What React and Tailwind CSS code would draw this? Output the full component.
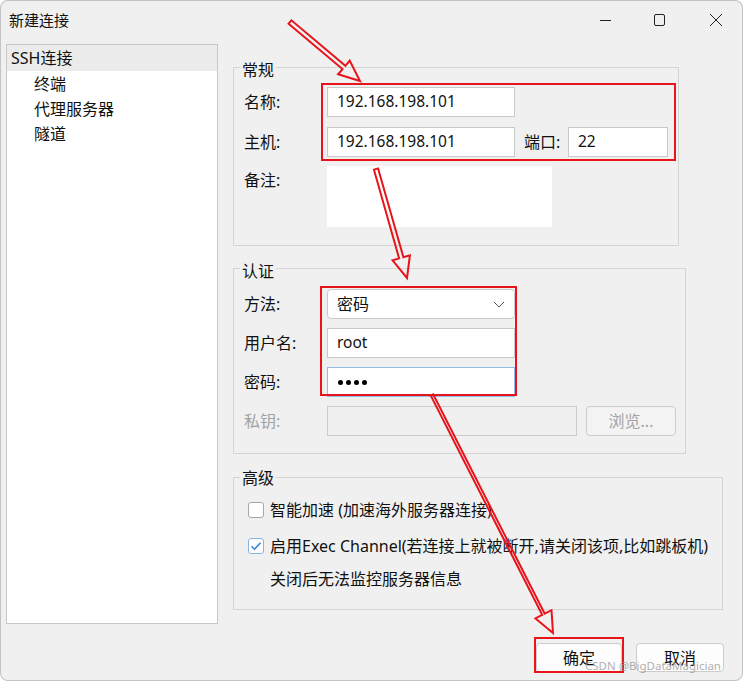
import React from "react";

// hollow arrow outline, tail -> tip
function arrowPoints(x1, y1, x2, y2, w = 2.2, hl = 21, hw = 9) {
  const dx = x2 - x1;
  const dy = y2 - y1;
  const len = Math.hypot(dx, dy);
  const ux = dx / len;
  const uy = dy / len;
  const nx = -uy;
  const ny = ux;
  const bx = x2 - ux * hl;
  const by = y2 - uy * hl;
  const pts = [
    [x1 + nx * w, y1 + ny * w],
    [bx + nx * w, by + ny * w],
    [bx + nx * hw, by + ny * hw],
    [x2, y2],
    [bx - nx * hw, by - ny * hw],
    [bx - nx * w, by - ny * w],
    [x1 - nx * w, y1 - ny * w],
  ];
  return pts.map((p) => p[0].toFixed(1) + "," + p[1].toFixed(1)).join(" ");
}

function GroupBox({ title, className, legendClass = "-mt-[8px]", children }) {
  return (
    <div className={`border border-[#d4d4d4] ${className}`}>
      <div className={`${legendClass} ml-[6px] px-[2px] w-fit bg-[#f0f0f0] leading-[20px]`}>{title}</div>
      {children}
    </div>
  );
}

function Input({ value, className = "" }) {
  return (
    <div className={`h-[30px] bg-white border border-[#c9c9c9] flex items-center pl-[9px] text-[15.5px] ${className}`}>
      {value}
    </div>
  );
}

function Label({ children, gray }) {
  return <div className={`w-[83px] shrink-0 ${gray ? "text-[#a3a3a3]" : ""}`}>{children}</div>;
}

export default function App() {
  return (
    <div className="relative w-[743px] h-[681px] bg-[#f0f0f0] rounded-[8px] overflow-hidden shadow-[inset_0_0_0_1px_#c4c4c4] text-[16px] text-[#111] font-['Noto_Sans','Noto_Sans_CJK_SC',sans-serif]">
      {/* title bar */}
      <div className="h-[40px] flex items-center justify-between pl-[9px]">
        <span className="text-[15px]">新建连接</span>
        <div className="flex items-center h-full">
          <svg width="14" height="14" viewBox="0 0 14 14" className="mr-[40px]">
            <path d="M1 7.5h11" stroke="#222" strokeWidth="1" />
          </svg>
          <svg width="14" height="14" viewBox="0 0 14 14" className="mr-[42px]">
            <rect x="1.5" y="1.5" width="10" height="11" rx="1.5" fill="none" stroke="#222" strokeWidth="1" />
          </svg>
          <svg width="14" height="14" viewBox="0 0 14 14" className="mr-[20px]">
            <path d="M1 1l12 12M13 1L1 13" stroke="#222" strokeWidth="1" />
          </svg>
        </div>
      </div>

      {/* body */}
      <div className="flex">
        <div className="ml-[6px] mt-[4px] w-[212px] h-[580px] bg-white border border-[#c8c8c8] shrink-0">
          <div className="h-[26px] bg-[#ebebeb] pl-[4px] flex items-center">SSH连接</div>
          <div className="h-[25px] pl-[27px] flex items-center">终端</div>
          <div className="h-[25px] pl-[27px] flex items-center">代理服务器</div>
          <div className="h-[25px] pl-[27px] flex items-center">隧道</div>
        </div>

        <div className="ml-[15px] mt-[27px] flex flex-col">
          <GroupBox title="常规" className="w-[446px] h-[179px]">
            <div className="pl-[10px] mt-[7px] flex flex-col gap-[10px]">
              <div className="flex items-center">
                <Label>名称:</Label>
                <Input value="192.168.198.101" className="w-[188px]" />
              </div>
              <div className="flex items-center">
                <Label>主机:</Label>
                <Input value="192.168.198.101" className="w-[188px]" />
                <div className="ml-[9px] w-[44px]">端口:</div>
                <Input value="22" className="w-[100px]" />
              </div>
              <div className="flex items-start -mt-[1px]">
                <div className="w-[83px] mt-[2px]">备注:</div>
                <div className="w-[225px] h-[61px] bg-white" />
              </div>
            </div>
          </GroupBox>

          <GroupBox title="认证" className="mt-[22px] w-[453px] h-[186px]">
            <div className="pl-[10px] mt-[8px] flex flex-col gap-[9px]">
              <div className="flex items-center">
                <Label>方法:</Label>
                <div className="w-[188px] h-[30px] bg-white border border-[#c9c9c9] rounded-[4px] flex items-center justify-between pl-[9px] pr-[9px]">
                  <span>密码</span>
                  <svg width="12" height="7" viewBox="0 0 12 7">
                    <path d="M1 1l5 5 5-5" fill="none" stroke="#555" strokeWidth="1" />
                  </svg>
                </div>
              </div>
              <div className="flex items-center">
                <Label>用户名:</Label>
                <Input value="root" className="w-[188px]" />
              </div>
              <div className="flex items-center">
                <Label>密码:</Label>
                <div className="w-[188px] h-[30px] bg-white border border-[#93bce6] flex items-center pl-[10px] gap-[3px]">
                  <span className="w-[5px] h-[5px] rounded-full bg-black" />
                  <span className="w-[5px] h-[5px] rounded-full bg-black" />
                  <span className="w-[5px] h-[5px] rounded-full bg-black" />
                  <span className="w-[5px] h-[5px] rounded-full bg-black" />
                </div>
              </div>
              <div className="flex items-center">
                <Label gray>私钥:</Label>
                <div className="w-[250px] h-[30px] bg-[#f0f0f0] border border-[#cccccc]" />
                <div className="ml-[9px] w-[90px] h-[30px] bg-[#f3f3f3] border border-[#cccccc] rounded-[4px] flex items-center justify-center text-[#a3a3a3]">
                  浏览...
                </div>
              </div>
            </div>
          </GroupBox>

          <GroupBox title="高级" className="mt-[23px] w-[490px] h-[133px]" legendClass="-mt-[10px]">
            <div className="pl-[14px] flex flex-col">
              <div className="mt-[10px] h-[24px] flex items-center">
                <div className="w-[16px] h-[16px] bg-white border border-[#a6a6a6] rounded-[3px] shrink-0" />
                <span className="ml-[6px]">智能加速 (加速海外服务器连接)</span>
              </div>
              <div className="mt-[12px] h-[24px] flex items-center">
                <div className="w-[16px] h-[16px] bg-white border border-[#86b4e6] rounded-[3px] flex items-center justify-center shrink-0">
                  <svg width="12" height="10" viewBox="0 0 12 10">
                    <path d="M1.5 5.2l3 3 6-6.5" fill="none" stroke="#2f86e0" strokeWidth="1.6" />
                  </svg>
                </div>
                <span className="ml-[6px] whitespace-nowrap">启用Exec Channel(若连接上就被断开,请关闭该项,比如跳板机)</span>
              </div>
              <div className="mt-[9px] h-[24px] flex items-center pl-[22px]">关闭后无法监控服务器信息</div>
            </div>
          </GroupBox>
        </div>
      </div>

      {/* footer buttons */}
      <div className="mt-[19px] flex justify-end gap-[14px] pr-[19px]">
        <div className="w-[86px] h-[29px] bg-[#fdfdfd] border border-[#cccccc] rounded-[4px] flex items-center justify-center">确定</div>
        <div className="w-[88px] h-[29px] bg-[#fdfdfd] border border-[#cccccc] rounded-[4px] flex items-center justify-center">取消</div>
      </div>

      {/* annotations */}
      <div className="absolute left-[321px] top-[83px] w-[355px] h-[78px] border-2 border-[#e8141b]" />
      <div className="absolute left-[320px] top-[286px] w-[197px] h-[110px] border-2 border-[#e8141b]" />
      <div className="absolute left-[534px] top-[637px] w-[90px] h-[36px] border-2 border-[#e8141b]" />
      <svg className="absolute inset-0 pointer-events-none" width="743" height="681">
        <polygon points={arrowPoints(290, 22, 360, 81)} fill="none" stroke="#e8141b" strokeWidth="2" strokeLinejoin="miter" />
        <polygon points={arrowPoints(376, 169, 407, 278)} fill="none" stroke="#e8141b" strokeWidth="2" />
        <polygon points={arrowPoints(432, 395, 553, 633, 1.4)} fill="none" stroke="#e8141b" strokeWidth="2" />
      </svg>
      <div className="absolute left-[585px] top-[658px] text-[11.5px] leading-[16px] text-[#9a9a9a]/80 font-['Noto_Sans',sans-serif]">CSDN @BigDataMagician</div>
    </div>
  );
}
